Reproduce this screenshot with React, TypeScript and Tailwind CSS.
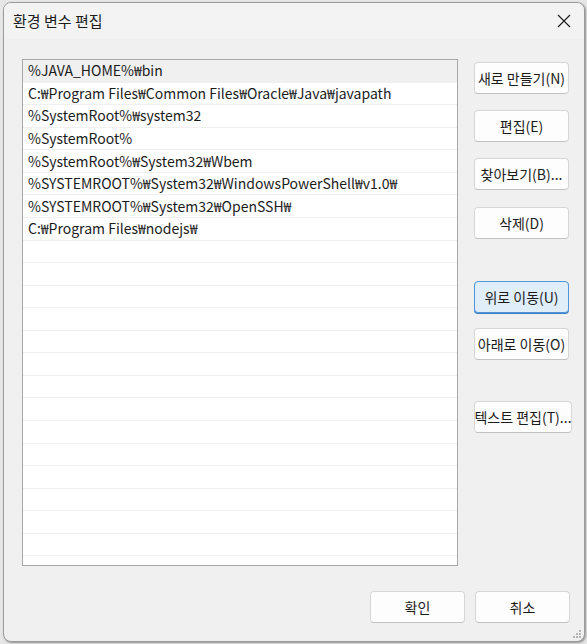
import React from 'react';

const paths = [
  '%JAVA_HOME%₩bin',
  'C:₩Program Files₩Common Files₩Oracle₩Java₩javapath',
  '%SystemRoot%₩system32',
  '%SystemRoot%',
  '%SystemRoot%₩System32₩Wbem',
  '%SYSTEMROOT%₩System32₩WindowsPowerShell₩v1.0₩',
  '%SYSTEMROOT%₩System32₩OpenSSH₩',
  'C:₩Program Files₩nodejs₩',
];

const TOTAL_ROWS = 23;

function WinButton({ label, className = '', focused = false }: { label: string; className?: string; focused?: boolean }) {
  return (
    <button
      type="button"
      className={
        'h-[32px] rounded-[4px] border text-[14px] text-[#1b1b1b] whitespace-nowrap flex items-center justify-center leading-none ' +
        (focused
          ? 'bg-[#e0eef9] border-[#4f95d8] shadow-[0_1px_0_#3c7fc4]'
          : 'bg-[#fdfdfd] border-[#d6d6d6] border-b-[#c2c2c2]') +
        ' ' +
        className
      }
    >
      {label}
    </button>
  );
}

export default function App() {
  const rows = Array.from({ length: TOTAL_ROWS }, (_, i) => paths[i] ?? '');

  return (
    <div
      className="w-[587px] h-[644px] bg-[#e6e6e6] pt-[2px] pl-[3px] pr-[2px] pb-[2px] overflow-hidden"
      style={{ fontFamily: '"Noto Sans CJK KR", "Noto Sans", sans-serif' }}
    >
      <div className="relative w-full h-full rounded-[8px] border border-[#9a9a9a] bg-[#f0f0f0] shadow-[1px_1px_2px_rgba(0,0,0,0.35)] flex flex-col overflow-hidden">
        {/* title bar */}
        <div className="h-[36px] flex items-center justify-between bg-[#f3f3f3] pl-[9px] pr-[12px]">
          <span className="text-[15px] text-[#1b1b1b]">환경 변수 편집</span>
          <svg width="14" height="14" viewBox="0 0 14 14" className="mr-[1px]">
            <path d="M1 1 L13 13 M13 1 L1 13" stroke="#1b1b1b" strokeWidth="1.1" fill="none" />
          </svg>
        </div>

        <div className="flex pl-[18px] pt-[20px]">
          {/* list box */}
          <div className="w-[436px] h-[507px] border border-[#a8a8a8] bg-white overflow-hidden">
            {rows.map((text, i) => (
              <div
                key={i}
                className={
                  'h-[22.57px] flex items-center pl-[5px] text-[14px] text-[#1b1b1b] border-b border-[#f0f0f0] whitespace-nowrap ' +
                  (i === 0 ? 'bg-[#f0f0f0]' : '')
                }
              >
                {text}
              </div>
            ))}
          </div>

          {/* side buttons */}
          <div className="ml-[16px] flex flex-col items-start pt-[3px]">
            <WinButton label="새로 만들기(N)" className="w-[95px]" />
            <WinButton label="편집(E)" className="w-[95px] mt-[16px]" />
            <WinButton label="찾아보기(B)..." className="w-[95px] mt-[16px]" />
            <WinButton label="삭제(D)" className="w-[95px] mt-[17px]" />
            <WinButton label="위로 이동(U)" className="w-[95px] mt-[42px]" focused />
            <WinButton label="아래로 이동(O)" className="w-[95px] mt-[15px]" />
            <WinButton label="텍스트 편집(T)..." className="w-[98px] mt-[41px]" />
          </div>
        </div>

        {/* bottom buttons */}
        <div className="flex justify-end gap-[10px] pr-[14px] mt-[25px]">
          <WinButton label="확인" className="w-[95px]" />
          <WinButton label="취소" className="w-[95px]" />
        </div>

        {/* resize grip */}
        <svg width="10" height="10" viewBox="0 0 10 10" className="absolute right-[2px] bottom-[2px]">
          <rect x="7" y="1" width="2" height="2" fill="#b5b5b5" />
          <rect x="4" y="4" width="2" height="2" fill="#b5b5b5" />
          <rect x="7" y="4" width="2" height="2" fill="#b5b5b5" />
          <rect x="1" y="7" width="2" height="2" fill="#b5b5b5" />
          <rect x="4" y="7" width="2" height="2" fill="#b5b5b5" />
          <rect x="7" y="7" width="2" height="2" fill="#b5b5b5" />
        </svg>
      </div>
    </div>
  );
}
